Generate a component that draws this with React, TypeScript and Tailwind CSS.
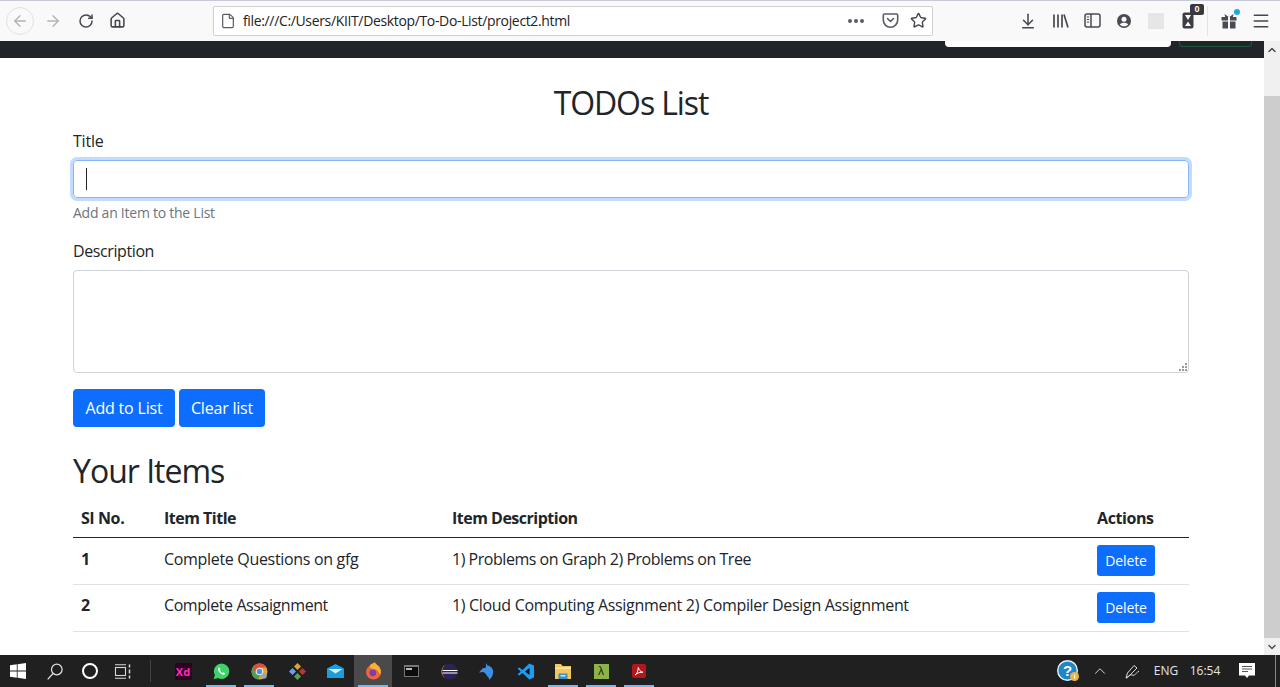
import React from 'react'
import {
  ArrowLeft,
  ArrowRight,
  ArrowDownToLine,
  RotateCw,
  Home,
  File,
  Star,
  ChevronUp,
  ChevronDown,
  Menu,
} from 'lucide-react'

const Pocket = () => (
  <svg width="17" height="17" viewBox="0 0 17 17" fill="none" stroke="#5b5b66" strokeWidth="1.6">
    <path d="M2.5 2h12a1.2 1.2 0 0 1 1.2 1.2V8a7.2 7.2 0 0 1-14.4 0V3.200A1.200 1.200 0 0 1 2.500 2z" />
    <path d="M5.500 6.500l3 3 3-3" strokeLinecap="round" strokeLinejoin="round" />
  </svg>
)

const Library = () => (
  <svg width="17" height="16" viewBox="0 0 17 16" fill="none" stroke="#4a4a52" strokeWidth="1.700">
    <path d="M2 1.500v13M6 1.500v13M10 1.500v13M12 1.500l4 13" />
  </svg>
)

const Sidebar = () => (
  <svg width="17" height="15" viewBox="0 0 17 15" fill="none" stroke="#4a4a52" strokeWidth="1.500">
    <rect x="1" y="1" width="15" height="13" rx="2" />
    <path d="M7 1v13" />
    <path d="M2.800 4h2.400M2.800 6.500h2.400M2.800 9h2.400" strokeWidth="1" />
  </svg>
)

const Account = () => (
  <svg width="16" height="16" viewBox="0 0 16 16">
    <circle cx="8" cy="8" r="7" fill="#4a4a52" />
    <circle cx="8" cy="6.200" r="2.500" fill="#f9f9fa" />
    <path d="M3.700 11.500c1.600-2.300 7-2.300 8.600 0-1.300 1.300-2.700 1.800-4.300 1.800s-3-.5-4.300-1.800z" fill="#f9f9fa" />
  </svg>
)

const Hourglass = () => (
  <svg width="12" height="17" viewBox="0 0 12 17">
    <rect x="0.500" y="0.500" width="11" height="16" rx="2" fill="#3d3d42" />
    <path d="M3 3h6L6 8zM3 14l3-4.500L9 14z" fill="#f9f9fa" />
  </svg>
)

const Gift = () => (
  <svg width="16" height="16" viewBox="0 0 16 16" fill="#4a4a52">
    <rect x="0.500" y="4" width="6.500" height="3.500" />
    <rect x="9" y="4" width="6.500" height="3.500" />
    <rect x="1.500" y="8.500" width="5.500" height="7" />
    <rect x="9" y="8.500" width="5.500" height="7" />
    <path d="M3.500 1l4.200 3H4.200zM12.500 1L8.300 4h3.500z" />
  </svg>
)

const WinLogo = () => (
  <svg width="16" height="16" viewBox="0 0 16 16" fill="#fff">
    <path d="M0 2.300l6.800-1v6.300H0zM7.600 1.200L16 0v7.600H7.600zM0 8.400h6.800v6.300l-6.800-1zM7.600 8.400H16V16l-8.400-1.200z" />
  </svg>
)

const SearchGlass = () => (
  <svg width="16" height="17" viewBox="0 0 16 17" fill="none" stroke="#e6e6e6" strokeWidth="1.200">
    <circle cx="9.800" cy="6.500" r="5.300" />
    <path d="M6 10.500l-5.300 5.800" />
  </svg>
)

const TaskView = () => (
  <svg width="17" height="15" viewBox="0 0 17 15" fill="none" stroke="#d8d8d8" strokeWidth="1.100">
    <rect x="1.500" y="3.500" width="10" height="8" />
    <path d="M1 .8h11M1 14.200h11" />
    <path d="M15.500 .5v3M15.500 5.500v4M15.500 11.500v3" strokeWidth="1.500" />
  </svg>
)

const Xd = () => (
  <div className="w-[17px] h-[17px] rounded-[2px] bg-[#2e001f] flex items-center justify-center text-[11px] font-bold text-[#ff2bc2] leading-none">
    Xd
  </div>
)

const Whatsapp = () => (
  <svg width="17" height="17" viewBox="0 0 17 17">
    <path d="M.7 16.300l1.200-4.200A7.700 7.700 0 1 1 5 15.100z" fill="#3fd268" />
    <path d="M5.800 4.500c-1.300 1 -1 2.700.4 4.600 1.500 1.900 3.300 3 4.700 2.600 1-.3 1.400-1 1.300-1.500l-1.900-1-.9.900c-1-.4-2-1.500-2.600-2.600l.7-.9-.9-2.100z" fill="#fff" />
  </svg>
)

const Chrome = () => (
  <svg width="17" height="17" viewBox="0 0 17 17">
    <circle cx="8.500" cy="8.500" r="8" fill="#e2a53a" />
    <path d="M8.500.5a8 8 0 0 0-6.900 4L4 10l4.500-5.500h7A8 8 0 0 0 8.500.5z" fill="#d9503f" />
    <path d="M1.600 4.500a8 8 0 0 0 5.600 11.900L10 11H5z" fill="#4d9d58" />
    <circle cx="8.500" cy="8.500" r="3.300" fill="#4f8fe0" stroke="#eee" strokeWidth="1.100" />
    <circle cx="13" cy="13" r="2.800" fill="#8fa8bd" />
  </svg>
)

const GitKraken = () => (
  <svg width="17" height="17" viewBox="0 0 17 17">
    <path d="M8.500 0l3.500 3.500-3.500 3.500L5 3.500z" fill="#d8a13c" />
    <path d="M3.500 5L7 8.500 3.500 12 0 8.500z" fill="#6f9fe0" />
    <path d="M13.500 5L17 8.500 13.500 12 10 8.500z" fill="#b33a33" />
    <path d="M8.500 10l3.500 3.500L8.500 17 5 13.500z" fill="#5aa05a" />
  </svg>
)

const Mail = () => (
  <svg width="17" height="14" viewBox="0 0 17 14">
    <path d="M0 4.500L8.500 0 17 4.500V14H0z" fill="#1b9ede" />
    <path d="M1.500 5h14L8.500 9.500z" fill="#d7f0fb" />
  </svg>
)

const Firefox = () => (
  <svg width="17" height="18" viewBox="0 0 17 18">
    <circle cx="8.500" cy="10" r="7.500" fill="#f0653a" />
    <path d="M5 3C7 1.500 9 1 10 0c0 2 2.500 2.500 4 4.500 2 2.500 2.500 6 1 8.500-1-4-4-6-7-6-1 0-2-.5-3-1.500z" fill="#f8b133" />
    <circle cx="7.800" cy="10.800" r="3.400" fill="#7a3fb0" />
  </svg>
)

const Terminal = () => (
  <div className="w-[15px] h-[12px] bg-[#0c0c0c] border border-[#777] border-t-[2px] flex items-start pl-[1px] pt-[1px]">
    <div className="w-[6px] h-[2px] bg-[#bbb]" />
  </div>
)

const Eclipse = () => (
  <svg width="17" height="17" viewBox="0 0 17 17">
    <circle cx="8.500" cy="8.500" r="8" fill="#2c2255" />
    <path d="M4 1.800A8 8 0 0 0 4 15.200 9 9 0 0 1 4 1.800z" fill="#f7941e" />
    <path d="M1.500 7h15v1H1.500zM1.500 9.500h15v1H1.500z" fill="#fff" />
  </svg>
)

const Dolphin = () => (
  <svg width="16" height="17" viewBox="0 0 16 17" fill="#3f8fe0">
    <path d="M7 0l1.500 2.500C12.500 3 15 6.500 14 11c-.6 2.500-2.200 4.500-4 6 .3-1.500-.3-2.800-1.500-3.500l-2-3L4.500 9 0 9.500 3.500 5.500 7 4.500z" />
  </svg>
)

const VsCode = () => (
  <svg width="17" height="17" viewBox="0 0 17 17">
    <path d="M12.300.5L17 2.500v12l-4.700 2L5.500 10l-3.300 2.500L.5 11.500 3.700 8.500.5 5.500l1.700-1L5.500 7z" fill="#1f9cf0" />
    <path d="M12.500 5L8 8.500 12.500 12z" fill="#0d0d0d" />
  </svg>
)

const Folder = () => (
  <svg width="16" height="15" viewBox="0 0 16 15">
    <path d="M0 0h6l1.500 2H16v13H0z" fill="#f3c75e" />
    <path d="M0 3.500h16V5H0z" fill="#fbe6a3" />
    <path d="M3.500 9.500h9V15h-9z" fill="#3d8fc4" />
    <path d="M5.500 11h5v1.500h-5z" fill="#cfe6f2" />
  </svg>
)

const Lambda = () => (
  <div className="w-[15px] h-[15px] bg-[#8eb24a] flex items-center justify-center text-[12px] text-[#1c2a0a] font-['Liberation_Sans',sans-serif] leading-none">
    λ
  </div>
)

const Pdf = () => (
  <div className="w-[14px] h-[14px] rounded-[2px] bg-[#b4161b] flex items-center justify-center">
    <svg width="10" height="10" viewBox="0 0 10 10" fill="none" stroke="#fff" strokeWidth="1">
      <path d="M1 9c2-1 3-4 3.300-7.500C5 4 6.500 6 9 6.300 6.500 6 3.500 6.800 1 9z" />
    </svg>
  </div>
)

const HelpBadge = () => (
  <svg width="23" height="23" viewBox="0 0 23 23">
    <circle cx="10.500" cy="10.500" r="9.800" fill="#1f86c7" stroke="#e8f4fb" strokeWidth="1.400" />
    <text x="10.500" y="16" textAnchor="middle" fontSize="15" fontWeight="700" fill="#fff" fontFamily="Liberation Sans, sans-serif">?</text>
    <circle cx="17.500" cy="16.500" r="4.500" fill="#e9b44c" />
    <path d="M17.500 14.500v4" stroke="#fff" strokeWidth="1.200" />
  </svg>
)

const PenIcon = () => (
  <svg width="15" height="15" viewBox="0 0 15 15" fill="none" stroke="#d8d8d8" strokeWidth="1">
    <path d="M1 14l1.500-5L9 1.500l3 2.500L5 11z" />
    <path d="M1 14c3 0 3-4 6-3s3-1 7-4" />
  </svg>
)

const ActionCenter = () => (
  <svg width="16" height="16" viewBox="0 0 16 16">
    <path d="M0 0h16v12.500H10L8 15l-2-2.500H0z" fill="#fff" />
    <path d="M3 3.500h10M3 6h10M3 8.500h6" stroke="#555" strokeWidth="1" />
  </svg>
)

function ToolIcon({ children }: { children: React.ReactNode }) {
  return <div className="w-[32px] h-[32px] flex items-center justify-center">{children}</div>
}

function Toolbar() {
  return (
    <div className="h-[41px] shrink-0 bg-[#f9f9fa] border-t border-[#c9c9dc] pb-[1px] flex items-center">
      <div className="w-[6px]" />
      <div className="w-[28px] h-[28px] rounded-full border border-[#e2e2e4] flex items-center justify-center">
        <ArrowLeft size={18} strokeWidth={1.800} className="text-[#b4b4b8]" />
      </div>
      <div className="w-[38px] flex justify-center">
        <ArrowRight size={18} strokeWidth={1.800} className="text-[#b4b4b8]" />
      </div>
      <div className="w-[28px] flex justify-center">
        <RotateCw size={16} strokeWidth={2.200} className="text-[#45454d]" />
      </div>
      <div className="w-[36px] flex justify-center -translate-x-[1px]">
        <Home size={17} strokeWidth={2.200} className="text-[#45454d]" />
      </div>
      <div className="ml-[77px] w-[720px] h-[30px] bg-white border border-[#d0d0d4] rounded-[2px] flex items-center">
        <File size={16} strokeWidth={1.800} className="ml-[6px] text-[#5b5b66]" />
        <span className="ml-[7px] flex-1 text-[14px] text-[#222] font-['Open_Sans',sans-serif] tracking-[-0.35px]">
          file:///C:/Users/KIIT/Desktop/To-Do-List/project2.html
        </span>
        <span className="flex gap-[2px] mr-[12px]">
          <span className="w-[4px] h-[4px] rounded-full bg-[#5b5b66]" />
          <span className="w-[4px] h-[4px] rounded-full bg-[#5b5b66]" />
          <span className="w-[4px] h-[4px] rounded-full bg-[#5b5b66]" />
        </span>
        <div className="w-[28px] flex justify-center"><Pocket /></div>
        <div className="w-[28px] flex justify-center">
          <Star size={17} strokeWidth={2} className="text-[#45454d]" />
        </div>
      </div>
      <div className="w-[79px]" />
      <ToolIcon><ArrowDownToLine size={18} strokeWidth={2} className="text-[#45454d] rotate-0" /></ToolIcon>
      <ToolIcon><Library /></ToolIcon>
      <ToolIcon><Sidebar /></ToolIcon>
      <ToolIcon><Account /></ToolIcon>
      <ToolIcon><div className="w-[16px] h-[16px] bg-[#e6e6e6]" /></ToolIcon>
      <ToolIcon>
        <div className="relative">
          <Hourglass />
          <span className="absolute -top-[8px] left-[8px] w-[14px] h-[11px] rounded-[2px] bg-[#38383d] text-white text-[9px] font-bold leading-[11px] text-center font-['Liberation_Sans',sans-serif]">
            0
          </span>
        </div>
      </ToolIcon>
      <div className="w-[1px] h-[30px] bg-[#e4e4e6] ml-[3px] mr-[5px]" />
      <ToolIcon>
        <div className="relative">
          <Gift />
          <span className="absolute -top-[4px] -right-[3px] w-[6px] h-[6px] rounded-full bg-[#1fa8e8]" />
        </div>
      </ToolIcon>
      <ToolIcon><Menu size={20} strokeWidth={1.800} className="text-[#45454d]" /></ToolIcon>
    </div>
  )
}

function Navbar() {
  return (
    <div className="h-[17px] shrink-0 bg-[#212529] flex items-start">
      <div className="ml-[945px] w-[226px] h-[6px] bg-white rounded-b-[4px]" />
      <div className="ml-[8px] w-[73px] h-[6px] border border-t-0 border-[#198754]/50 rounded-b-[4px]" />
    </div>
  )
}

function Scrollbar() {
  return (
    <div className="w-[16px] shrink-0 bg-[#f0f0f0] flex flex-col items-center">
      <div className="h-[17px] flex items-center">
        <ChevronUp size={12} strokeWidth={3} className="text-[#505050]" />
      </div>
      <div className="h-[38px]" />
      <div className="w-full h-[542px] bg-[#cdcdcd]" />
      <div className="flex-1 flex items-center">
        <ChevronDown size={12} strokeWidth={3} className="text-[#505050]" />
      </div>
    </div>
  )
}

const rows = [
  { n: 1, title: 'Complete Questions on gfg', desc: '1) Problems on Graph 2) Problems on Tree' },
  { n: 2, title: 'Complete Assaignment', desc: '1) Cloud Computing Assignment 2) Compiler Design Assignment' },
]

function Content() {
  return (
    <div className="flex-1 min-h-0 overflow-hidden bg-white pl-[73px] pr-[75px] text-[#212529] text-[16px] font-['Open_Sans',sans-serif]">
      <h2 className="mt-[24px] h-[42px] text-[32px] leading-[42px] text-center tracking-[-1.1px]">TODOs List</h2>
      <label className="block mt-[5px] h-[24px] leading-[24px] tracking-[-0.2px]">Title</label>
      <div className="mt-[7px] h-[38px] rounded-[4px] border border-[#86b7fe] shadow-[0_0_0_3px_rgba(13,110,253,0.25)] flex items-center pl-[12px]">
        <div className="w-[1px] h-[22px] bg-[#222]" />
      </div>
      <div className="mt-[4px] h-[21px] text-[14px] leading-[21px] text-[#6c757d] tracking-[-0.25px]">Add an Item to the List</div>
      <label className="block mt-[16px] h-[24px] leading-[24px] tracking-[-0.4px]">Description</label>
      <div className="relative mt-[7px] h-[103px] rounded-[4px] border border-[#ced4da]">
        <svg width="8" height="8" viewBox="0 0 8 8" fill="#9a9a9a" className="absolute right-[1px] bottom-[1px]">
          <path d="M6 0h2v2H6zM3 3h2v2H3zM6 3h2v2H6zM0 6h2v2H0zM3 6h2v2H3zM6 6h2v2H6z" />
        </svg>
      </div>
      <div className="mt-[16px] flex gap-[4px]">
        <button className="h-[38px] w-[102px] rounded-[4px] bg-[#0d6efd] text-white tracking-[-0.2px]">Add to List</button>
        <button className="h-[38px] w-[86px] rounded-[4px] bg-[#0d6efd] text-white tracking-[-0.2px]">Clear list</button>
      </div>
      <h2 className="mt-[23px] h-[42px] text-[32px] leading-[42px] tracking-[-1px]">Your Items</h2>
      <table className="mt-[9px] w-full table-fixed border-collapse tracking-[-0.32px]">
        <thead>
          <tr className="h-[36px] border-b border-[#212529] text-left">
            <th className="w-[83px] px-[8px] pb-[2px] font-bold">Sl No.</th>
            <th className="w-[288px] px-[8px] pb-[2px] font-bold tracking-[-0.5px]">Item Title</th>
            <th className="w-[645px] px-[8px] pb-[2px] font-bold tracking-[-0.5px]">Item Description</th>
            <th className="px-[8px] pb-[2px] font-bold tracking-[-0.4px]">Actions</th>
          </tr>
        </thead>
        <tbody>
          {rows.map((r) => (
            <tr key={r.n} className="h-[47px] border-b border-[#dee2e6]">
              <th className={r.n === 1 ? 'px-[8px] pb-[4px] text-left font-bold' : 'px-[8px] pb-[6px] text-left font-bold'}>{r.n}</th>
              <td className={r.n === 1 ? 'px-[8px] pb-[4px]' : 'px-[8px] pb-[6px] tracking-[-0.42px]'}>{r.title}</td>
              <td className={r.n === 1 ? 'px-[8px] pb-[4px] tracking-[-0.47px]' : 'px-[8px] pb-[6px]'}>{r.desc}</td>
              <td className="px-[8px]">
                <button className="block w-[58px] h-[31px] rounded-[3px] bg-[#0d6efd] text-white text-[14px] tracking-[-0.1px]">Delete</button>
              </td>
            </tr>
          ))}
        </tbody>
      </table>
    </div>
  )
}

function Taskbar() {
  const Slot = ({ children, on, active }: { children: React.ReactNode; on?: boolean; active?: boolean }) => (
    <div className={active ? 'relative w-[38px] h-full flex items-center justify-center bg-[#4a4a4a]' : 'relative w-[38px] h-full flex items-center justify-center'}>
      {children}
      {on && <div className="absolute bottom-0 left-[4px] right-[4px] h-[2px] bg-[#76b9ed]" />}
    </div>
  )
  return (
    <div className="h-[32px] shrink-0 bg-[#202020] flex items-center text-[#e6e6e6] text-[12px] font-['Open_Sans',sans-serif]">
      <div className="w-[36px] flex justify-center"><WinLogo /></div>
      <div className="w-[37px] flex justify-center"><SearchGlass /></div>
      <div className="w-[34px] flex justify-center">
        <div className="w-[16px] h-[16px] rounded-full border-[2.500px] border-white" />
      </div>
      <div className="w-[30px] flex justify-center"><TaskView /></div>
      <div className="ml-[13px] w-[1px] h-[22px] bg-[#444]" />
      <div className="ml-[13px] flex h-full">
        <Slot><Xd /></Slot>
        <Slot on><Whatsapp /></Slot>
        <Slot on><Chrome /></Slot>
        <Slot><GitKraken /></Slot>
        <Slot><Mail /></Slot>
        <Slot on active><Firefox /></Slot>
        <Slot><Terminal /></Slot>
        <Slot><Eclipse /></Slot>
        <Slot><Dolphin /></Slot>
        <Slot><VsCode /></Slot>
        <Slot on><Folder /></Slot>
        <Slot on><Lambda /></Slot>
        <Slot on><Pdf /></Slot>
      </div>
      <div className="flex-1" />
      <div className="w-[34px] flex justify-center"><HelpBadge /></div>
      <div className="w-[30px] flex justify-center"><ChevronUp size={18} strokeWidth={1.200} /></div>
      <div className="w-[34px] flex justify-center"><PenIcon /></div>
      <div className="w-[34px] text-center">ENG</div>
      <div className="w-[44px] text-center">16:54</div>
      <div className="w-[40px] flex justify-center"><ActionCenter /></div>
      <div className="w-[13px] h-full flex justify-start pl-[8px]">
        <div className="w-[1px] h-full bg-[#888]" />
      </div>
    </div>
  )
}

export default function App() {
  return (
    <div className="w-[1280px] h-[687px] flex flex-col overflow-hidden bg-white">
      <Toolbar />
      <div className="flex-1 min-h-0 flex">
        <div className="flex-1 min-w-0 flex flex-col">
          <Navbar />
          <Content />
        </div>
        <Scrollbar />
      </div>
      <Taskbar />
    </div>
  )
}
